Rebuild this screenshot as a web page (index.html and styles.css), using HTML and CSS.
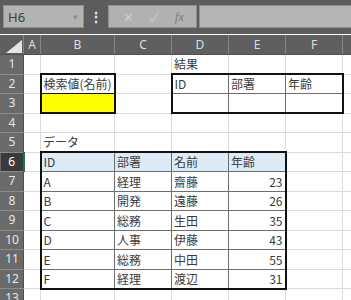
FILE: index.html
```html
<!DOCTYPE html>
<html lang="ja">
<head>
    <meta charset="UTF-8">
    <title>Book1 - Excel</title>
    <link rel="stylesheet" href="styles.css">
</head>
<body>
    <div class="topbar">
        <div class="namebox"><span>H6</span><span class="drop">▾</span></div>
        <div class="grip">⋮</div>
        <div class="fxbtns">
            <span class="btn">✕</span>
            <span class="btn">✓</span>
            <span class="btn fx">fx</span>
        </div>
        <div class="fxinput"></div>
    </div>

    <table class="sheet">
        <colgroup>
            <col class="c-rh"><col class="c-a"><col class="c-b"><col class="c-n"><col class="c-n"><col class="c-n"><col class="c-n"><col class="c-g">
        </colgroup>
        <tr class="colhead">
            <th class="corner"><svg width="16" height="13" viewBox="0 0 16 13"><polygon points="16,0 16,13 0,13" fill="#e4e4e4"/></svg></th>
            <th>A</th><th>B</th><th>C</th><th>D</th><th>E</th><th>F</th><th></th>
        </tr>
        <tr><th>1</th><td></td><td></td><td></td><td>結果</td><td></td><td></td><td></td></tr>
        <tr><th>2</th><td></td><td class="blk T L R">検索値(名前)</td><td></td>
            <td class="ln T L">ID</td><td class="ln T">部署</td><td class="ln T R">年齢</td><td></td></tr>
        <tr><th>3</th><td></td><td class="blk B L R yellow"></td><td></td>
            <td class="ln B L"></td><td class="ln B"></td><td class="ln B R"></td><td></td></tr>
        <tr><th>4</th><td></td><td></td><td></td><td></td><td></td><td></td><td></td></tr>
        <tr><th>5</th><td></td><td>データ</td><td></td><td></td><td></td><td></td><td></td></tr>
        <tr><th class="active">6</th><td></td>
            <td class="ln hdr T L">ID</td><td class="ln hdr T">部署</td><td class="ln hdr T">名前</td><td class="ln hdr T R">年齢</td><td></td><td></td></tr>
        <tr><th>7</th><td></td><td class="ln L">A</td><td class="ln">経理</td><td class="ln">齋藤</td><td class="ln R num">23</td><td></td><td></td></tr>
        <tr><th>8</th><td></td><td class="ln L">B</td><td class="ln">開発</td><td class="ln">遠藤</td><td class="ln R num">26</td><td></td><td></td></tr>
        <tr><th>9</th><td></td><td class="ln L">C</td><td class="ln">総務</td><td class="ln">生田</td><td class="ln R num">35</td><td></td><td></td></tr>
        <tr><th>10</th><td></td><td class="ln L">D</td><td class="ln">人事</td><td class="ln">伊藤</td><td class="ln R num">43</td><td></td><td></td></tr>
        <tr><th>11</th><td></td><td class="ln L">E</td><td class="ln">総務</td><td class="ln">中田</td><td class="ln R num">55</td><td></td><td></td></tr>
        <tr><th>12</th><td></td><td class="ln L B">F</td><td class="ln B">経理</td><td class="ln B">渡辺</td><td class="ln B R num">31</td><td></td><td></td></tr>
        <tr><th>13</th><td></td><td></td><td></td><td></td><td></td><td></td><td></td></tr>
    </table>
</body>
</html>
```

FILE: styles.css
```css
* {
    margin: 0;
    padding: 0;
    box-sizing: border-box;
}

body {
    width: 351px;
    height: 300px;
    overflow: hidden;
    background: #ffffff;
    font-family: "Noto Sans CJK JP", "Noto Sans", sans-serif;
}

/* name box + formula bar */
.topbar {
    height: 34px;
    background: #5c5c5c;
    display: flex;
    align-items: flex-start;
    padding: 5px 0 0 3px;
    width: 360px;
}

.namebox {
    width: 81px;
    height: 23px;
    background: #b3b3b3;
    border: 1px solid #8f8f8f;
    display: flex;
    align-items: center;
    justify-content: space-between;
    padding: 0 5px 0 4px;
    font-family: "Noto Sans", sans-serif;
    font-size: 13px;
    color: #3e3e3e;
}

.namebox .drop {
    font-size: 9px;
    color: #8a8a8a;
}

.grip {
    width: 24px;
    text-align: center;
    color: #e8e8e8;
    font-size: 14px;
    font-weight: bold;
    line-height: 22px;
}

.fxbtns {
    width: 89px;
    height: 23px;
    background: #b1b1b1;
    border: 1px solid #8f8f8f;
    display: flex;
    align-items: center;
    justify-content: space-around;
    padding: 0 4px 0 6px;
    color: #cdcdcd;
    font-size: 13px;
}

.fxbtns .fx {
    font-family: "Liberation Serif", serif;
    font-style: italic;
    color: #7e7e7e;
    font-size: 13px;
}

.fxinput {
    margin-left: 2px;
    flex: 1;
    height: 23px;
    background: #b4b4b4;
    border: 1px solid #8f8f8f;
}

/* grid */
.sheet {
    border-collapse: collapse;
    table-layout: fixed;
    width: 360px;
    margin-top: 1px;
}

.c-rh { width: 23px; }
.c-a { width: 17px; }
.c-b { width: 74px; }
.c-n { width: 57px; }
.c-g { width: 20px; }

.sheet tr {
    height: 19.5px;
}

.sheet tr.colhead {
    height: 19px;
}

.colhead th {
    background: #5f5f5f;
    color: #dedede;
    font-family: "Noto Sans", sans-serif;
    font-weight: normal;
    font-size: 12px;
    border: 1px solid #5f5f5f;
    border-right: 1px solid #858585;
    border-bottom: 1px solid #4f4f4f;
    text-align: center;
    vertical-align: middle;
}

.colhead th.corner {
    text-align: right;
    vertical-align: bottom;
    padding: 0 1px 1px 0;
    line-height: 0;
}

th {
    background: #6a6a6a;
    color: #e6e6e6;
    font-family: "Noto Sans", sans-serif;
    font-weight: normal;
    font-size: 12px;
    border: 1px solid #6a6a6a;
    border-bottom: 1px solid #8c8c8c;
    border-right: 1px solid #4f4f4f;
    text-align: center;
    line-height: 1;
}

th.active {
    background: #3a3a3a;
    color: #ffffff;
    border-right: 2px solid #217346;
}

td {
    border: 1px solid #dcdcdc;
    font-size: 12px;
    color: #3b3b3b;
    white-space: nowrap;
    overflow: visible;
    padding: 0 2px 1px 2px;
    vertical-align: bottom;
    line-height: 16px;
}

.ln { border: 1px solid #6e6e6e; }
.blk { border: 1px solid #111111; }
.T { border-top: 2px solid #111111; }
.B { border-bottom: 2px solid #111111; }
.L { border-left: 2px solid #111111; }
.R { border-right: 2px solid #111111; }

.yellow { background: #ffff00; }
.hdr { background: #ddebf7; }

.num {
    text-align: right;
    padding-right: 2px;
}
```
